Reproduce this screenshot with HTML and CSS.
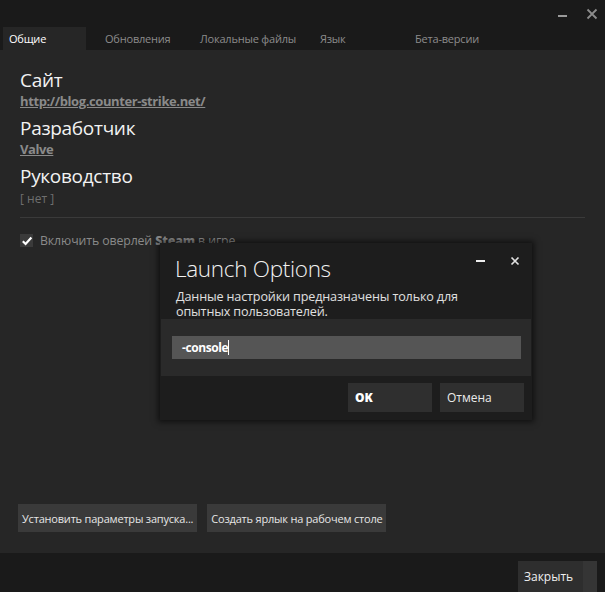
FILE: index.html
```html
<!DOCTYPE html>
<html lang="ru">
<head>
<meta charset="utf-8">
<link rel="stylesheet" href="styles.css">
</head>
<body>
<div class="window">
  <div class="titlebar">
    <div class="wincontrols">
      <span class="min"></span>
      <svg class="close" width="12" height="12" viewBox="0 0 12 12"><path d="M1.5 1.5 L10.5 10.5 M10.5 1.5 L1.5 10.5" stroke="#8c8c8c" stroke-width="1.8"/></svg>
    </div>
    <div class="tabs">
      <div class="tab active">Общие</div>
      <div class="tab t2">Обновления</div>
      <div class="tab t3">Локальные файлы</div>
      <div class="tab t4">Язык</div>
      <div class="tab t5">Бета-версии</div>
    </div>
  </div>
  <div class="content">
    <div class="field">
      <div class="label">Сайт</div>
      <a class="link">http://blog.counter-strike.net/</a>
    </div>
    <div class="field">
      <div class="label">Разработчик</div>
      <a class="link">Valve</a>
    </div>
    <div class="field">
      <div class="label">Руководство</div>
      <div class="none">[ нет ]</div>
    </div>
    <div class="sep"></div>
    <div class="check">
      <span class="box"><svg width="12" height="12" viewBox="0 0 12 12"><path d="M1.8 6.2 L4.6 9 L10.4 2.6" fill="none" stroke="#fff" stroke-width="2.2"/></svg></span>
      <span class="checktext">Включить оверлей <b>Steam</b> в игре</span>
    </div>
    <div class="spacer"></div>
    <div class="actions">
      <button class="btn">Установить параметры запуска...</button>
      <button class="btn">Создать ярлык на рабочем столе</button>
    </div>
  </div>
  <div class="footer">
    <button class="closebtn">Закрыть</button>
  </div>

  <div class="dialog">
    <div class="dhead">
      <div class="dtitle">Launch Options</div>
      <div class="dcontrols">
        <span class="dmin"></span>
        <svg width="10" height="10" viewBox="0 0 10 10"><path d="M1.5 1.5 L8.5 8.5 M8.5 1.5 L1.5 8.5" stroke="#e0e0e0" stroke-width="1.7"/></svg>
      </div>
    </div>
    <div class="ddesc">Данные настройки предназначены только для опытных пользователей.</div>
    <div class="dband">
      <div class="dinput">-console<span class="caret"></span></div>
    </div>
    <div class="dbuttons">
      <button class="dbtn ok">OK</button>
      <button class="dbtn">Отмена</button>
    </div>
  </div>
</div>
</body>
</html>
```
FILE: styles.css
```css
html, body {
  margin: 0;
  padding: 0;
  background: #262626;
}
.window {
  position: relative;
  width: 605px;
  height: 592px;
  display: flex;
  flex-direction: column;
  font-family: "Open Sans", "Noto Sans", sans-serif;
  overflow: hidden;
}
.titlebar {
  background: #1a1a1a;
  height: 50px;
  display: flex;
  flex-direction: column;
  justify-content: space-between;
}
.wincontrols {
  display: flex;
  justify-content: flex-end;
  align-items: center;
  gap: 19px;
  padding: 7px 7px 0 0;
  height: 14px;
}
.min {
  width: 9px;
  height: 2px;
  background: #9a9a9a;
  margin-top: 4px;
}
.tabs {
  display: flex;
  height: 23px;
  padding-left: 3px;
}
.tab {
  box-sizing: border-box;
  font-size: 11px;
  color: #8c8c8c;
  padding-left: 19px;
  line-height: 23px;
  letter-spacing: -0.2px;
}
.tab.active {
  background: #262626;
  color: #fff;
  width: 83px;
  padding-left: 6px;
}
.tab.t2 { width: 95px; }
.tab.t3 { width: 120px; }
.tab.t4 { width: 95px; }
.content {
  flex: 1;
  background: #262626;
  padding: 19px 20px 21px 20px;
  display: flex;
  flex-direction: column;
}
.field {
  display: flex;
  flex-direction: column;
  align-items: flex-start;
}
.field + .field {
  margin-top: 6px;
}
.label {
  font-size: 19px;
  color: #f2f2f2;
  line-height: 22px;
  letter-spacing: -0.3px;
}
.link {
  font-size: 13px;
  font-weight: bold;
  color: #8a8a8a;
  text-decoration: underline;
  line-height: 20px;
  letter-spacing: -0.4px;
}
.none {
  font-size: 12px;
  color: #6f6f6f;
  line-height: 20px;
  margin-top: 2px;
}
.sep {
  height: 1px;
  background: #3a3a3a;
  margin-top: 8px;
}
.check {
  display: flex;
  align-items: center;
  gap: 7px;
  margin-top: 14px;
}
.box {
  width: 13px;
  height: 13px;
  background: #3a3a3a;
  display: flex;
  align-items: center;
  justify-content: center;
}
.checktext {
  font-size: 12.3px;
  color: #8a8a8a;
  letter-spacing: -0.1px;
}
.checktext b {
  color: #8a8a8a;
  font-weight: 800;
}
.spacer { flex: 1; }
.actions {
  display: flex;
  gap: 10px;
  margin-left: -2px;
}
.btn {
  font-family: inherit;
  font-size: 11px;
  color: #e6e6e6;
  background: #3a3a3a;
  border: none;
  height: 28px;
  padding: 0 4px;
  letter-spacing: -0.2px;
}
.footer {
  height: 39px;
  background: #1a1a1a;
  display: flex;
  justify-content: flex-end;
  align-items: flex-end;
  padding-right: 8px;
}
.closebtn {
  font-family: inherit;
  font-size: 12px;
  color: #f0f0f0;
  background: linear-gradient(to right, #2e2e2e 0 82%, #353535 82%);
  border: none;
  width: 79px;
  height: 31px;
  text-align: left;
  padding-left: 6px;
}
.dialog {
  position: absolute;
  left: 160px;
  top: 243px;
  width: 372px;
  height: 177px;
  background: #1d1d1d;
  box-shadow: 0 0 6px 2px rgba(0,0,0,0.6);
  display: flex;
  flex-direction: column;
}
.dhead {
  display: flex;
  justify-content: space-between;
  padding: 11px 12px 0 15px;
}
.dtitle {
  font-size: 22.5px;
  font-weight: 300;
  color: #f2f2f2;
  line-height: 30px;
  letter-spacing: -0.3px;
}
.dcontrols {
  display: flex;
  gap: 25px;
  align-items: center;
  height: 10px;
  margin-top: 2px;
}
.dmin {
  width: 9px;
  height: 2px;
  background: #eee;
}
.ddesc {
  font-size: 12.6px;
  color: #e0e0e0;
  line-height: 15px;
  padding: 5px 60px 0 16px;
  letter-spacing: -0.15px;
}
.dband {
  background: #2a2a2a;
  height: 57px;
  margin: 0 1px;
  display: flex;
  align-items: center;
  padding: 0 10px 0 11px;
}
.dinput {
  flex: 1;
  height: 23px;
  background: #555;
  color: #fff;
  font-weight: bold;
  font-size: 12px;
  line-height: 23px;
  padding-left: 10px;
  display: flex;
  align-items: center;
  letter-spacing: -0.4px;
}
.caret {
  width: 1px;
  height: 15px;
  background: #fff;
}
.dbuttons {
  display: flex;
  justify-content: flex-end;
  gap: 8px;
  padding: 7px 8px 0 0;
}
.dbtn {
  font-family: inherit;
  font-size: 12px;
  color: #eaeaea;
  background: #2f2f2f;
  border: none;
  width: 84px;
  height: 29px;
  text-align: left;
  padding-left: 7px;
}
.dbtn.ok {
  font-weight: 800;
  color: #fff;
}
```
